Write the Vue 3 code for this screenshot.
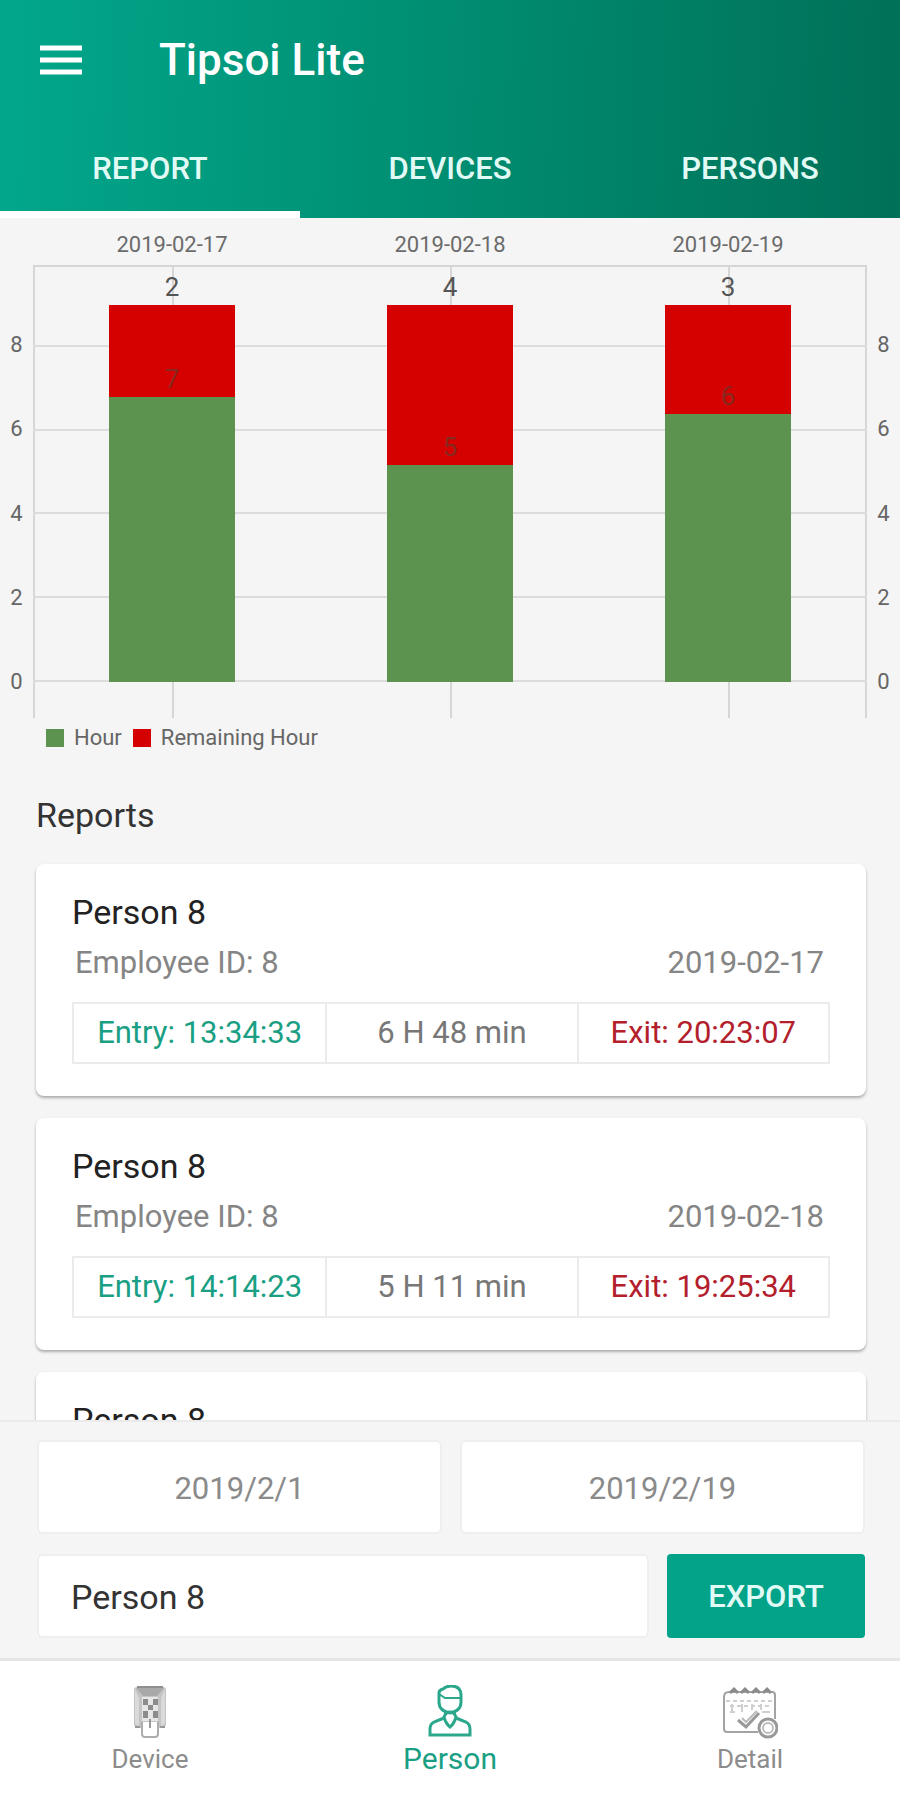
<template>
  <div class="app">
    <header class="header">
      <div class="header__bar">
        <button type="button" class="header__menu" aria-label="Open menu">
          <svg width="44" height="30" viewBox="0 0 44 30">
            <path d="M1 3h42M1 15h42M1 27h42" stroke="#fff" stroke-width="5" />
          </svg>
        </button>
        <h1 class="header__title">Tipsoi Lite</h1>
      </div>
      <nav class="tabs">
        <button
          v-for="tab in tabs"
          :key="tab"
          type="button"
          class="tabs__item"
          :class="{ 'tabs__item--active': tab === activeTab }"
          @click="activeTab = tab"
        >
          {{ tab }}
        </button>
      </nav>
    </header>

    <main class="content">
      <section class="chart">
        <div class="chart__dates">
          <span v-for="day in days" :key="day.date">{{ day.date }}</span>
        </div>
        <div class="chart__body">
          <div class="chart__axis">
            <span v-for="t in ticks" :key="t" class="chart__tick" :style="{ bottom: percent(t) }">{{ t }}</span>
          </div>
          <div class="chart__plot">
            <div v-for="t in ticks" :key="t" class="chart__line" :style="{ bottom: percent(t) }" />
            <div v-for="day in days" :key="day.date" class="chart__column">
              <div class="chart__bar" :style="{ height: percent(total) }">
                <span class="chart__value">{{ Math.round(total - day.hours) }}</span>
                <div class="chart__done" :style="{ height: (day.hours / total) * 100 + '%' }">
                  <span class="chart__value chart__value--inner">{{ Math.round(day.hours) }}</span>
                </div>
              </div>
            </div>
          </div>
          <div class="chart__axis">
            <span v-for="t in ticks" :key="t" class="chart__tick" :style="{ bottom: percent(t) }">{{ t }}</span>
          </div>
        </div>
        <div class="legend">
          <span class="legend__item"><i class="legend__swatch" />Hour</span>
          <span class="legend__item"><i class="legend__swatch legend__swatch--red" />Remaining Hour</span>
        </div>
      </section>

      <section class="reports">
        <h2 class="reports__title">Reports</h2>
        <article v-for="r in reports" :key="r.date" class="card">
          <h3 class="card__name">{{ r.name }}</h3>
          <div class="card__meta">
            <span>Employee ID: {{ r.id }}</span>
            <span>{{ r.date }}</span>
          </div>
          <div class="card__times">
            <span class="card__cell card__cell--entry">Entry: {{ r.entry }}</span>
            <span class="card__cell">{{ r.duration }}</span>
            <span class="card__cell card__cell--exit">Exit: {{ r.exit }}</span>
          </div>
        </article>
      </section>
    </main>

    <form class="filters" @submit.prevent>
      <div class="filters__row">
        <input v-model="from" type="text" class="filters__input filters__input--date" aria-label="From date" />
        <input v-model="to" type="text" class="filters__input filters__input--date" aria-label="To date" />
      </div>
      <div class="filters__row">
        <input v-model="person" type="text" class="filters__input" aria-label="Person" />
        <button type="submit" class="filters__export">EXPORT</button>
      </div>
    </form>

    <nav class="bottom">
      <button type="button" class="bottom__item">
        <svg width="56" height="54" viewBox="0 0 56 54" fill="none">
          <path d="M15 2h26q3 0 3 3v34q0 4-6 4H18q-6 0-6-4V5q0-3 3-3z" fill="#c4c4c4" />
          <path d="M14 3h28l-7 8H21z" fill="#a9a9a9" />
          <path d="M13 4v34l4 4V13zM43 4v34l-4 4V13z" fill="#dadada" />
          <path d="M15 2h26" stroke="#8f8f8f" stroke-width="2" />
          <rect x="20" y="12" width="16" height="24" fill="#e6e6e6" />
          <path d="M21 14h5v6h-5zM31 14h5v6h-5zM26 20h5v5h-5zM21 26h5v7h-5zM31 26h5v7h-5z" fill="#8c8c8c" />
          <path d="M20 37v12q0 3 3 3h10q3 0 3-3V37" fill="#fff" stroke="#adadad" stroke-width="2" />
          <path d="M28 34v9M13 42h5M38 42h5" stroke="#999" stroke-width="2" />
        </svg>
        <span>Device</span>
      </button>
      <button type="button" class="bottom__item bottom__item--active">
        <svg width="56" height="54" viewBox="0 0 56 54" fill="none" stroke="#2ba88c" stroke-width="3">
          <path d="M17 11v-3q0-3 4-4q3-3 8-3q10 0 10 9v7q0 9-11 11q-11-2-11-11z" />
          <path d="M17 9q3 2 6 4h16" stroke-width="2" />
          <path d="M23 26v5M33 26v5" stroke-width="2" />
          <path d="M28 27q4 0 6 5q-2 7-6 10q-4-3-6-10q2-5 6-5z" />
          <path d="M22 33L12 37q-4 2-4 7v6h40v-6q0-5-4-7l-10-4" />
        </svg>
        <span>Person</span>
      </button>
      <button type="button" class="bottom__item">
        <svg width="56" height="54" viewBox="0 0 56 54" fill="none" stroke="#a3a3a3" stroke-width="2">
          <path d="M36 47H5q-3 0-3-3V12q0-5 5-5h43q3 0 3 3v24" />
          <path d="M4 16h48M8 21h40" stroke="#cfcfcf" stroke-dasharray="4 3" />
          <path d="M8 27h5M40 27h8M10 19v8M20 19v8M30 19v6M39 19v6" stroke="#cfcfcf" />
          <path d="M8 8l4-4 4 4M19 8l4-4 4 4M30 8l4-4 4 4M41 8l4-4 4 4" stroke="#8b8b8b" stroke-width="3" />
          <path d="M16 35l8 7 13-14" stroke="#999" stroke-width="3" />
          <path d="M20 33l4 4 11-11" stroke="#bbb" />
          <circle cx="46" cy="43" r="9" fill="#fff" stroke="#999" stroke-width="3" />
          <circle cx="46" cy="43" r="5" stroke="#bbb" />
        </svg>
        <span>Detail</span>
      </button>
    </nav>
  </div>
</template>

<script setup>
import { ref } from 'vue'

const tabs = ['REPORT', 'DEVICES', 'PERSONS']
const activeTab = ref('REPORT')

const total = 9
const axisMax = 9.9
const ticks = [0, 2, 4, 6, 8]
const days = [
  { date: '2019-02-17', hours: 6.8 },
  { date: '2019-02-18', hours: 5.18 },
  { date: '2019-02-19', hours: 6.4 },
]

const percent = (value) => (value / axisMax) * 100 + '%'

const reports = [
  { name: 'Person 8', id: 8, date: '2019-02-17', entry: '13:34:33', duration: '6 H 48 min', exit: '20:23:07' },
  { name: 'Person 8', id: 8, date: '2019-02-18', entry: '14:14:23', duration: '5 H 11 min', exit: '19:25:34' },
  { name: 'Person 8', id: 8, date: '2019-02-19', entry: '13:10:05', duration: '6 H 24 min', exit: '19:34:12' },
]

const from = ref('2019/2/1')
const to = ref('2019/2/19')
const person = ref('Person 8')
</script>

<style>
body {
  margin: 0;
  background: #f5f5f5;
}
</style>

<style scoped>
.app {
  display: flex;
  flex-direction: column;
  height: 100vh;
  font-family: Roboto, 'Liberation Sans', sans-serif;
  color: #333;
  background: #f5f5f5;
}

button,
input {
  font-family: inherit;
  box-sizing: border-box;
}

.header {
  flex: none;
  color: #fff;
  background: linear-gradient(92deg, #02a78b 0%, #008c70 52%, #007058 100%);
}

.header__bar {
  display: flex;
  align-items: center;
  gap: 76px;
  height: 120px;
  padding-left: 39px;
}

.header__menu {
  display: flex;
  padding: 0;
  border: none;
  background: none;
  cursor: pointer;
}

.header__title {
  margin: 0;
  font-size: 44px;
  font-weight: 500;
  line-height: 52px;
}

.tabs {
  display: grid;
  grid-template-columns: repeat(3, 1fr);
}

.tabs__item {
  height: 98px;
  padding: 6px 0 0;
  font-size: 31px;
  font-weight: 500;
  color: #e2faf5;
  background: none;
  border: none;
  border-bottom: 7px solid transparent;
  cursor: pointer;
}

.tabs__item--active {
  border-bottom-color: #fff;
}

.content {
  flex: 1;
  min-height: 0;
  overflow: hidden;
}

.chart__dates {
  display: grid;
  grid-template-columns: repeat(3, 1fr);
  margin: 0 33px;
  padding: 14px 0 7px;
  font-size: 22px;
  line-height: 26px;
  text-align: center;
  color: #6b6b6b;
}

.chart__body {
  display: grid;
  grid-template-columns: 33px 1fr 33px;
  height: 417px;
  margin-bottom: 47px;
}

.chart__axis {
  position: relative;
}

.chart__tick {
  position: absolute;
  left: 0;
  right: 0;
  font-size: 22px;
  line-height: 26px;
  text-align: center;
  color: #666;
  transform: translateY(50%);
}

.chart__plot {
  position: relative;
  display: grid;
  grid-template-columns: repeat(3, 1fr);
  border-top: 2px solid #d6d6d6;
}

/* side borders run on below the zero line */
.chart__plot::before {
  content: '';
  position: absolute;
  inset: 0 0 -36px;
  border: solid #d6d6d6;
  border-width: 0 2px;
}

.chart__line {
  position: absolute;
  left: 0;
  right: 0;
  height: 2px;
  background: #dcdcdc;
}

.chart__column {
  position: relative;
  display: flex;
  align-items: flex-end;
  justify-content: center;
}

.chart__column::before {
  content: '';
  position: absolute;
  top: 0;
  bottom: -36px;
  left: 50%;
  width: 2px;
  background: #d6d6d6;
}

.chart__bar {
  position: relative;
  display: flex;
  align-items: flex-end;
  width: 45%;
  background: #d50000;
}

.chart__done {
  position: relative;
  width: 100%;
  background: #5c944f;
}

.chart__value {
  position: absolute;
  bottom: 100%;
  left: 0;
  right: 0;
  padding-bottom: 3px;
  font-size: 26px;
  line-height: 30px;
  text-align: center;
  color: #555;
}

.chart__value--inner {
  color: #86291f;
}

.legend {
  display: flex;
  gap: 11px;
  padding-left: 46px;
  font-size: 22px;
  line-height: 18px;
  color: #666;
}

.legend__item {
  display: flex;
  align-items: center;
  gap: 10px;
}

.legend__swatch {
  width: 18px;
  height: 18px;
  background: #5c944f;
}

.legend__swatch--red {
  background: #d50000;
}

.reports {
  padding: 48px 34px 0 36px;
}

.reports__title {
  margin: 0 0 29px;
  font-size: 34px;
  font-weight: 400;
  line-height: 40px;
}

.card {
  box-sizing: border-box;
  margin-bottom: 22px;
  padding: 28px 36px 32px;
  background: #fff;
  border-radius: 8px;
  box-shadow: 0 2px 3px rgba(0, 0, 0, 0.3);
}

.card__name {
  margin: 0;
  font-size: 34px;
  font-weight: 400;
  line-height: 40px;
  color: #222;
}

.card__meta {
  display: flex;
  justify-content: space-between;
  padding: 14px 6px 22px 3px;
  font-size: 31px;
  line-height: 34px;
  color: #858585;
}

.card__times {
  display: grid;
  grid-template-columns: repeat(3, 1fr);
  border: 2px solid #ebebeb;
}

.card__cell {
  font-size: 31px;
  line-height: 58px;
  text-align: center;
  color: #777;
}

.card__cell + .card__cell {
  border-left: 2px solid #ebebeb;
}

.card__cell--entry {
  color: #1a9f84;
}

.card__cell--exit {
  color: #b3202c;
}

.filters {
  flex: none;
  display: flex;
  flex-direction: column;
  gap: 20px;
  padding: 18px 35px 20px 37px;
  border-top: 2px solid #ebebeb;
}

.filters__row {
  display: flex;
  gap: 18px;
}

.filters__input {
  flex: 1;
  min-width: 0;
  height: 84px;
  padding: 2px 32px 0;
  font-size: 34px;
  color: #333;
  background: #fff;
  border: 2px solid #efefef;
  border-radius: 6px;
}

.filters__input--date {
  height: 94px;
  font-size: 31px;
  text-align: center;
  color: #8a8a8a;
}

.filters__export {
  width: 198px;
  height: 84px;
  font-size: 31px;
  font-weight: 500;
  color: #e2faf5;
  background: #02a389;
  border: none;
  border-radius: 4px;
  cursor: pointer;
}

.bottom {
  flex: none;
  display: grid;
  grid-template-columns: repeat(3, 1fr);
  background: #fff;
  border-top: 3px solid #e6e6e6;
}

.bottom__item {
  display: flex;
  flex-direction: column;
  align-items: center;
  gap: 3px;
  height: 139px;
  padding: 24px 0 0;
  font-size: 26px;
  line-height: 34px;
  color: #8c8c8c;
  background: none;
  border: none;
  cursor: pointer;
}

.bottom__item--active {
  font-size: 30px;
  color: #1a9f84;
}
</style>
